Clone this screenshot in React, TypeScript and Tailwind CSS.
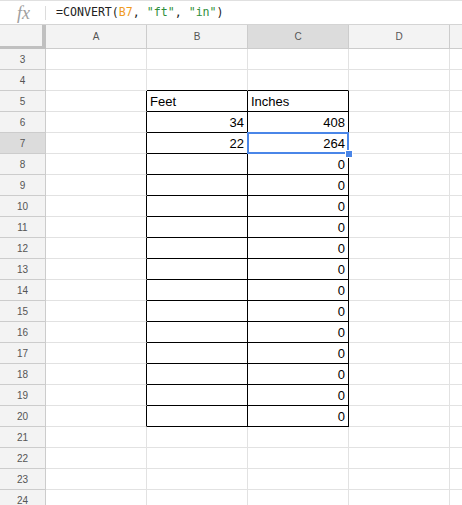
import React from "react";

const cols = ["A", "B", "C", "D"];
const rows = Array.from({ length: 22 }, (_, i) => i + 3);

const data: Record<string, { v: string; right?: boolean }> = {
  B5: { v: "Feet" },
  C5: { v: "Inches" },
  B6: { v: "34", right: true },
  C6: { v: "408", right: true },
  B7: { v: "22", right: true },
  C7: { v: "264", right: true },
};
for (let r = 8; r <= 20; r++) data["C" + r] = { v: "0", right: true };

const gridCols = "grid grid-cols-[46px_101px_101px_101px_101px_1fr]";

function cellClass(col: string, row: number) {
  const inTable = row >= 5 && row <= 20;
  let cls = "relative h-[21px] border-r border-b border-[#e2e2e2] ";
  const rightBlack = inTable && (col === "A" || col === "B" || col === "C");
  const bottomBlack = (row === 4 || (row >= 5 && row <= 20)) && (col === "B" || col === "C");
  if (rightBlack) cls += "border-r-black ";
  if (bottomBlack) cls += "border-b-black ";
  if (col === "C" && row === 7) cls += "z-10 ";
  return cls;
}

export default function App() {
  return (
    <div className="w-[462px] h-[505px] overflow-hidden bg-white font-['Liberation_Sans',Arial,sans-serif]">
      {/* formula bar */}
      <div className="flex items-center h-[25px] border-t border-b border-[#e0e0e0] border-b-[#d4d4d4]">
        <div className="w-[45px] flex justify-center items-center text-[#9e9e9e] italic font-['Liberation_Serif',serif] text-[18px] leading-none pl-[2px]">
          fx
        </div>
        <div className="w-px h-[14px] bg-[#dcdcdc]" />
        <div className="pl-[10px] font-['DejaVu_Sans_Mono',monospace] text-[11.6px] text-[#222] whitespace-pre">
          =CONVERT(<span className="text-[#f09b1e]">B7</span>, <span className="text-[#2f8f3a]">"ft"</span>, <span className="text-[#2f8f3a]">"in"</span>)
        </div>
      </div>
      {/* column headers */}
      <div className={gridCols + " h-[24px] bg-[#f3f3f3] text-[10px] text-[#555]"}>
        <div className="border-r-4 border-b-[3px] border-[#c0c0c0] bg-[#f3f3f3]" />
        {cols.map((c) => (
          <div
            key={c}
            className={
              "flex items-center justify-center border-r border-b border-[#cccccc] " +
              (c === "C" ? "bg-[#dcdcdc]" : "")
            }
          >
            {c}
          </div>
        ))}
        <div className="border-b border-[#cccccc]" />
      </div>
      {/* rows */}
      {rows.map((r) => (
        <div key={r} className={gridCols + (r === 7 ? " relative z-10" : "")}>
          <div
            className={
              "h-[21px] flex items-center justify-center text-[10px] text-[#555] border-r border-b border-[#cccccc] " +
              (r === 7 ? "bg-[#dcdcdc]" : "bg-[#f3f3f3]")
            }
          >
            {r}
          </div>
          {cols.map((c) => {
            const d = data[c + r];
            return (
              <div key={c} className={cellClass(c, r)}>
                {d && (
                  <div
                    className={
                      "h-full flex items-center px-[3px] text-[13px] text-black leading-none " +
                      (d.right ? "justify-end" : "justify-start")
                    }
                  >
                    {d.v}
                  </div>
                )}
                {c === "C" && r === 7 && (
                  <>
                    <div className="absolute -left-px -top-px right-[-1px] bottom-[-1px] border-2 border-[#4a86e8]" />
                    <div className="absolute right-[-5px] bottom-[-5px] w-[8px] h-[8px] bg-[#4a86e8] border border-white" />
                  </>
                )}
              </div>
            );
          })}
          <div className="h-[21px] border-b border-[#e2e2e2]" />
        </div>
      ))}
    </div>
  );
}
